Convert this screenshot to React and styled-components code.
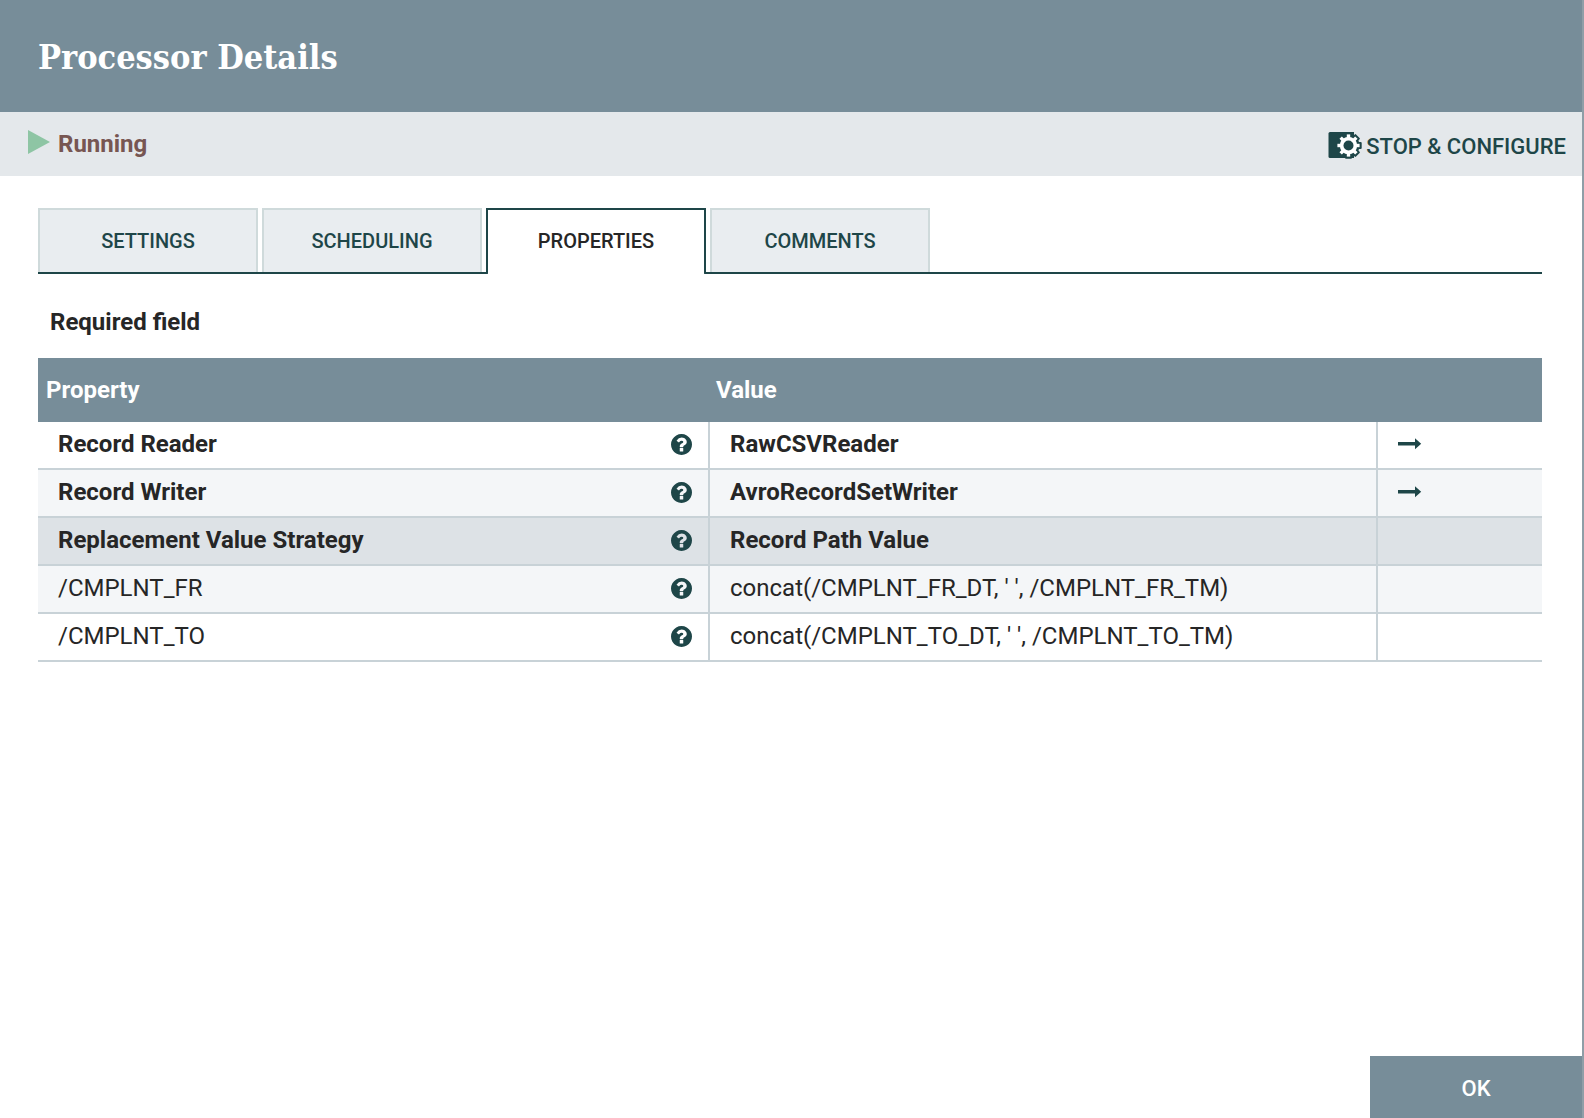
import React from "react";
import styled, { createGlobalStyle } from "styled-components";

const tabs = ["Settings", "Scheduling", "Properties", "Comments"];

const properties = [
  { name: "Record Reader", value: "RawCSVReader", required: true, link: true },
  { name: "Record Writer", value: "AvroRecordSetWriter", required: true, link: true },
  { name: "Replacement Value Strategy", value: "Record Path Value", required: true, selected: true },
  { name: "/CMPLNT_FR", value: "concat(/CMPLNT_FR_DT, ' ', /CMPLNT_FR_TM)" },
  { name: "/CMPLNT_TO", value: "concat(/CMPLNT_TO_DT, ' ', /CMPLNT_TO_TM)" },
];

const PlayIcon = () => (
  <svg width="22" height="24" viewBox="0 0 22 24" aria-hidden="true">
    <path d="M0 0L22 12L0 24Z" fill="#8ec5a4" />
  </svg>
);

const teeth = [0, 45, 90, 135, 180, 225, 270, 315];

const ConfigureIcon = () => (
  <svg width="34" height="28" viewBox="0 0 34 28" aria-hidden="true">
    <path d="M2 1H26V27H2Q0.500 27 0.500 25.500V2.500Q0.500 1 2 1Z" fill="#1e4648" />
    <g fill="#1e4648">
      <circle cx="20.500" cy="14.500" r="11" />
      {teeth.map((a) => (
        <rect key={a} x="17" y="1.300" width="7" height="7" rx="1" transform={`rotate(${a} 20.500 14.500)`} />
      ))}
    </g>
    <g fill="#fff">
      <circle cx="20.500" cy="14.500" r="8.700" />
      {teeth.map((a) => (
        <rect key={a} x="18.800" y="3.400" width="3.400" height="5" transform={`rotate(${a} 20.500 14.500)`} />
      ))}
    </g>
    <circle cx="20.500" cy="14.500" r="5" fill="#1e4648" />
  </svg>
);

const HelpIcon = () => (
  <svg width="21" height="21" viewBox="128 128 1536 1536" aria-hidden="true">
    <path
      fill="currentColor"
      d="M1024 1376v-192q0-14-9-23t-23-9h-192q-14 0-23 9t-9 23v192q0 14 9 23t23 9h192q14 0 23-9t9-23zm256-672q0-88-55.500-163t-138.500-116-170-41q-243 0-371 213-15 24 8 42l132 100q7 6 19 6 16 0 25-12 53-68 86-92 34-24 86-24 48 0 85.500 26t37.500 59q0 38-20 61t-68 45q-63 28-115.500 86.500t-52.500 125.500v36q0 14 9 23t23 9h192q14 0 23-9t9-23q0-19 21.500-49.500t54.500-49.500q32-18 49-28.500t46-35 44.500-48 28-60.500 12.500-81zm384 192q0 209-103 385.500t-279.500 279.500-385.500 103-385.500-103-279.500-279.500-103-385.500 103-385.500 279.500-279.500 385.500-103 385.500 103 279.500 279.500 103 385.500z"
    />
  </svg>
);

const ArrowIcon = () => (
  <svg width="24" height="12" viewBox="0 0 24 12" aria-hidden="true">
    <path d="M0 4H17V0.300L23.200 5.700L17 11.200V7.400H0Z" fill="currentColor" />
  </svg>
);

const App = () => {
  return (
    <>
      <GlobalStyle />
      <Dialog>
        <Header>
          <h1>Processor Details</h1>
        </Header>
        <StatusBar>
          <Status>
            <PlayIcon />
            <span>Running</span>
          </Status>
          <StopButton type="button">
            <ConfigureIcon />
            <span>Stop &amp; Configure</span>
          </StopButton>
        </StatusBar>
        <Content>
          <Tabs role="tablist">
            {tabs.map((tab) => (
              <Tab key={tab} type="button" role="tab" aria-selected={tab === "Properties"} $active={tab === "Properties"}>
                {tab}
              </Tab>
            ))}
          </Tabs>
          <Required>Required field</Required>
          <Table>
            <colgroup>
              <col className="name" />
              <col />
              <col className="actions" />
            </colgroup>
            <thead>
              <tr>
                <th>Property</th>
                <th>Value</th>
                <th aria-label="Actions"></th>
              </tr>
            </thead>
            <tbody>
              {properties.map((item) => (
                <Row key={item.name} $required={item.required} $selected={item.selected}>
                  <td>
                    <Name>
                      {item.name}
                      <IconButton type="button" aria-label={`About ${item.name}`}>
                        <HelpIcon />
                      </IconButton>
                    </Name>
                  </td>
                  <td>{item.value}</td>
                  <td>
                    {item.link && (
                      <IconButton type="button" aria-label={`Go to ${item.value}`}>
                        <ArrowIcon />
                      </IconButton>
                    )}
                  </td>
                </Row>
              ))}
            </tbody>
          </Table>
        </Content>
        <Footer>
          <OkButton type="button">Ok</OkButton>
        </Footer>
      </Dialog>
    </>
  );
};

const GlobalStyle = createGlobalStyle`
  * {
    box-sizing: border-box;
  }
  body {
    margin: 0;
    padding-right: 2px;
    background: #8f9ea7;
    color: #262626;
    font-family: Roboto, sans-serif;
    font-size: 24px;
    line-height: 28px;
  }
  button {
    font-family: inherit;
    cursor: pointer;
  }
  svg {
    display: block;
    flex: none;
  }
`;

const Dialog = styled.div`
  display: flex;
  flex-direction: column;
  min-height: 100vh;
  background: #fff;
`;

const Header = styled.header`
  display: flex;
  align-items: center;
  height: 112px;
  padding: 2px 38px 0;
  background: #778d99;
  color: #fff;
  h1 {
    margin: 0;
    font-family: "Roboto Slab", "DejaVu Serif Condensed", "DejaVu Serif", serif;
    font-size: 34px;
    font-weight: 700;
    line-height: 48px;
  }
`;

const StatusBar = styled.div`
  display: flex;
  align-items: center;
  justify-content: space-between;
  height: 64px;
  padding: 0 16px 0 28px;
  background: #e4e8eb;
`;

const Status = styled.div`
  display: flex;
  gap: 8px;
  align-items: center;
  padding-bottom: 4px;
  color: #775652;
  font-weight: 700;
  span {
    padding-top: 4px;
  }
`;

const StopButton = styled.button`
  display: flex;
  gap: 4px;
  align-items: flex-start;
  padding: 4px 0 0;
  border: 0;
  background: none;
  color: #1e4648;
  font-size: 22px;
  font-weight: 500;
  line-height: 28px;
  text-transform: uppercase;
  span {
    padding-top: 2px;
  }
`;

const Content = styled.main`
  flex: 1;
  padding: 32px 40px 32px 38px;
`;

const Tabs = styled.div`
  display: flex;
  gap: 4px;
  align-items: flex-start;
  height: 66px;
  box-shadow: inset 0 -2px #1e4648;
`;

const Tab = styled.button`
  width: 220px;
  height: ${(props) => (props.$active ? "66px" : "64px")};
  padding: ${(props) => (props.$active ? "0 0 2px" : "0")};
  border: 2px solid ${(props) => (props.$active ? "#1e4648" : "#cfdadb")};
  border-bottom: 0;
  border-radius: ${(props) => (props.$active ? "0 0 2px 2px" : "0")};
  background: ${(props) => (props.$active ? "#fff" : "#e9edf0")};
  color: ${(props) => (props.$active ? "#262626" : "#1e4648")};
  font-size: 20px;
  font-weight: 500;
  text-transform: uppercase;
`;

const Required = styled.div`
  padding: 34px 12px 22px;
  font-weight: 700;
`;

const Table = styled.table`
  width: 100%;
  table-layout: fixed;
  border-collapse: separate;
  border-spacing: 0;
  .name {
    width: 44.55%;
  }
  .actions {
    width: 166px;
  }
  th {
    height: 64px;
    padding: 0 8px;
    background: #778d99;
    color: #fff;
    font-weight: 700;
    text-align: left;
  }
  td {
    height: 48px;
    padding: 0 20px 2px;
    border-bottom: 2px solid #c8d2d7;
  }
  td + td {
    border-left: 2px solid #c8d2d7;
  }
`;

const Row = styled.tr`
  background: #fff;
  font-weight: ${(props) => (props.$required ? 700 : 400)};
  &:nth-child(even) {
    background: #f4f6f8;
  }
  && {
    ${(props) => props.$selected && "background: #dde2e6;"}
  }
`;

const Name = styled.div`
  display: flex;
  align-items: center;
  justify-content: space-between;
  margin-right: -4px;
`;

const IconButton = styled.button`
  display: block;
  padding: 0;
  border: 0;
  background: none;
  color: #1e4648;
`;

const Footer = styled.footer`
  display: flex;
  justify-content: flex-end;
`;

const OkButton = styled.button`
  width: 212px;
  height: 62px;
  padding: 2px 0 0;
  border: 0;
  background: #778d99;
  color: #fff;
  font-size: 22px;
  font-weight: 500;
  text-transform: uppercase;
`;

export default App;
